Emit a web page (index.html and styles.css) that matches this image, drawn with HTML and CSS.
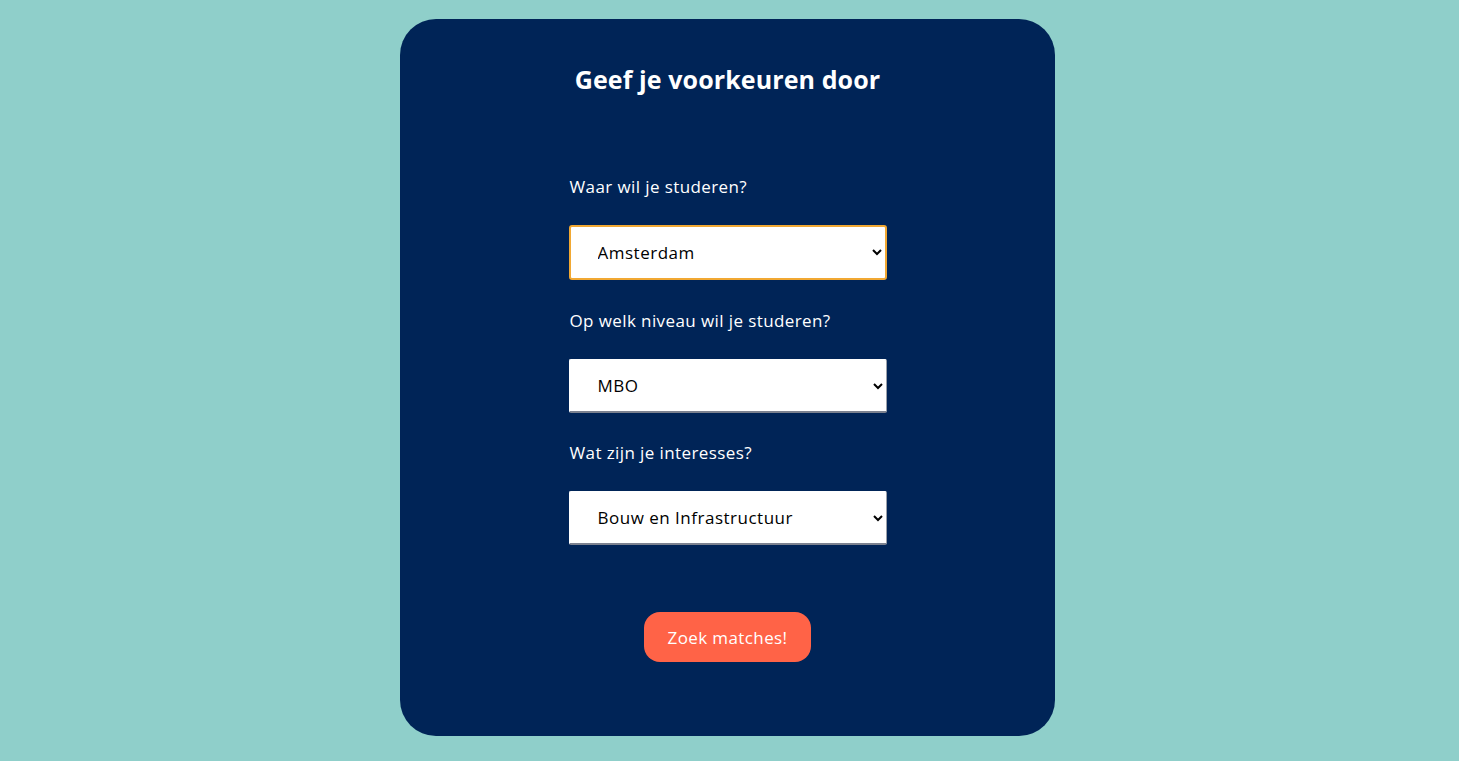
FILE: index.html
```html
<!DOCTYPE html>
<html lang="nl">
<head>
<meta charset="utf-8">
<title>Voorkeuren</title>
<link rel="stylesheet" href="styles.css">
</head>
<body>
<main class="card">
  <h1 class="title">Geef je voorkeuren door</h1>
  <form class="form">
    <label class="label" for="plaats">Waar wil je studeren?</label>
    <select id="plaats" class="select select--focus">
      <option>Amsterdam</option>
    </select>
    <label class="label" for="niveau">Op welk niveau wil je studeren?</label>
    <select id="niveau" class="select">
      <option>MBO</option>
    </select>
    <label class="label" for="interesse">Wat zijn je interesses?</label>
    <select id="interesse" class="select">
      <option>Bouw en Infrastructuur</option>
    </select>
    <div class="actions">
      <button type="button" class="button">Zoek matches!</button>
    </div>
  </form>
</main>
</body>
</html>
```

FILE: styles.css
```css
html, body {
  margin: 0;
  padding: 0;
}
body {
  background: #8fcfca;
  font-family: "Open Sans", Lato, sans-serif;
  height: 761px;
  overflow: hidden;
}
.card {
  box-sizing: border-box;
  width: 655px;
  height: 717px;
  margin: 19px 0 0 400px;
  background: #002457;
  border-radius: 36px;
  padding-top: 46px;
  display: flex;
  flex-direction: column;
  align-items: center;
}
.title {
  margin: 0;
  color: #fff;
  font-size: 25px;
  font-weight: 700;
  line-height: 28px;
  letter-spacing: 0.1px;
}
.form {
  width: 318px;
  margin-top: 84px;
  display: flex;
  flex-direction: column;
}
.label {
  color: #fff;
  font-size: 17px;
  line-height: 20px;
  letter-spacing: 0.4px;
  margin-left: 1px;
}
.select {
  box-sizing: border-box;
  width: 318px;
  height: 54px;
  margin: 28px 0 30px;
  padding: 0 6px 0 24px;
  font-family: "Open Sans", Lato, sans-serif;
  font-size: 17px;
  letter-spacing: 0.5px;
  color: #000;
  background: #fff;
  border: 1px solid #fff;
  border-bottom: 2px solid #7c8290;
  border-right: 1px solid #9aa0aa;
  border-radius: 2px;
}
.select--focus {
  border: 2px solid #f1a833;
  border-radius: 3px;
  height: 55px;
  margin-bottom: 31px;
  padding-left: 23px;
}
.actions {
  display: flex;
  justify-content: center;
  margin-top: 37px;
}
.button {
  width: 167px;
  height: 50px;
  border: none;
  border-radius: 16px;
  background: #ff6347;
  color: #fff;
  font-family: "Open Sans", Lato, sans-serif;
  font-size: 17px;
  letter-spacing: 0.4px;
  cursor: pointer;
  padding: 0;
}
```
